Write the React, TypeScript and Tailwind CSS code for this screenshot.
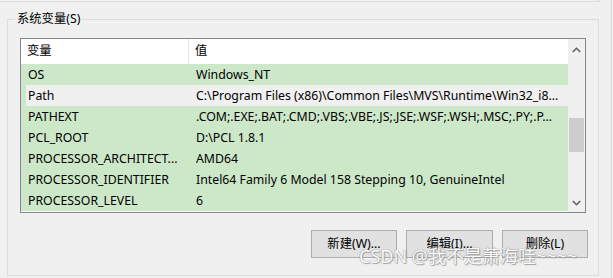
import React from "react";

const rows: { name: string; value: string; kind: "green" | "sel" }[] = [
  { name: "OS", value: "Windows_NT", kind: "green" },
  { name: "Path", value: "C:\\Program Files (x86)\\Common Files\\MVS\\Runtime\\Win32_i8...", kind: "sel" },
  { name: "PATHEXT", value: ".COM;.EXE;.BAT;.CMD;.VBS;.VBE;.JS;.JSE;.WSF;.WSH;.MSC;.PY;.P...", kind: "green" },
  { name: "PCL_ROOT", value: "D:\\PCL 1.8.1", kind: "green" },
  { name: "PROCESSOR_ARCHITECT...", value: "AMD64", kind: "green" },
  { name: "PROCESSOR_IDENTIFIER", value: "Intel64 Family 6 Model 158 Stepping 10, GenuineIntel", kind: "green" },
  { name: "PROCESSOR_LEVEL", value: "6", kind: "green" },
];

function Chevron({ up }: { up: boolean }) {
  return (
    <svg width="9" height="6" viewBox="0 0 9 6">
      <path
        d={up ? "M0.8 5 L4.5 1.3 L8.2 5" : "M0.8 1 L4.5 4.7 L8.2 1"}
        fill="none"
        stroke="#606060"
        strokeWidth="1.6"
      />
    </svg>
  );
}

function Btn({ label, w }: { label: string; w: string }) {
  return (
    <div
      className={`${w} h-[28px] bg-[#e1e1e1] border border-[#adadad] flex items-center justify-center text-[12.3px] text-black`}
    >
      {label}
    </div>
  );
}

export default function App() {
  return (
    <div
      className="w-[613px] h-[278px] bg-[#f0f0f0] overflow-hidden relative flex"
      style={{ fontFamily: '"Noto Sans", "Noto Sans CJK SC", sans-serif' }}
    >
      <div className="w-[611px] flex flex-col">
        <div className="h-[2px] w-[600px] border-b border-r border-[#dcdcdc]" />
        <div className="ml-[7px] mt-[17px] w-[592px] h-[257px] border border-[#dcdcdc] relative flex flex-col">
          <div className="absolute left-[7px] top-[-10px] px-[2px] bg-[#f0f0f0] text-[12.3px] leading-[18px] text-black">
            系统变量(S)
          </div>
          <div className="ml-[12px] mt-[18px] w-[566px] h-[175px] border border-[#828790] flex bg-white">
            <div className="w-[547px] flex flex-col">
              <div className="h-[25px] flex bg-white text-[12.3px] text-black">
                <div className="w-[168px] border-r border-[#e5e5e5] pl-[6px] flex items-center">变量</div>
                <div className="flex-1 pl-[6px] flex items-center">值</div>
              </div>
              {rows.map((r) => (
                <div key={r.name} className="h-[21px] flex bg-[#cde8c9] text-[12.3px] text-black whitespace-nowrap">
                  <div className={`flex flex-1 pt-[1px] ${r.kind === "sel" ? "ml-[5px] bg-[#f0f0f0]" : ""}`}>
                    <div className={`${r.kind === "sel" ? "w-[164px] pl-[2px]" : "w-[169px] pl-[7px]"} flex items-center overflow-hidden`}>
                      {r.name}
                    </div>
                    <div className="flex-1 pl-[6px] flex items-center overflow-hidden">{r.value}</div>
                  </div>
                </div>
              ))}
            </div>
            <div className="w-[17px] bg-[#f0f0f0] flex flex-col items-center">
              <div className="h-[17px] mt-[2px] flex items-center justify-center">
                <Chevron up />
              </div>
              <div className="mt-[60px] w-[15px] h-[34px] bg-[#cdcdcd]" />
              <div className="flex-1" />
              <div className="h-[17px] mb-[1px] flex items-center justify-center">
                <Chevron up={false} />
              </div>
            </div>
          </div>
          <div className="mt-[17px] ml-[303px] flex gap-[9px]">
            <Btn label="新建(W)..." w="w-[86px]" />
            <Btn label="编辑(I)..." w="w-[87px]" />
            <Btn label="删除(L)" w="w-[86px]" />
          </div>
        </div>
      </div>
      <div className="w-[1px] h-full bg-[#dadada]" />
      <div
        className="absolute left-[359px] top-[243px] text-[18px] leading-[26px] text-white whitespace-nowrap opacity-85"
        style={{ textShadow: "0 0 1px #888, 0 0 1px #888, 1px 1px 1px #999" }}
      >
        CSDN @我不是萧海哇~~~~
      </div>
    </div>
  );
}
